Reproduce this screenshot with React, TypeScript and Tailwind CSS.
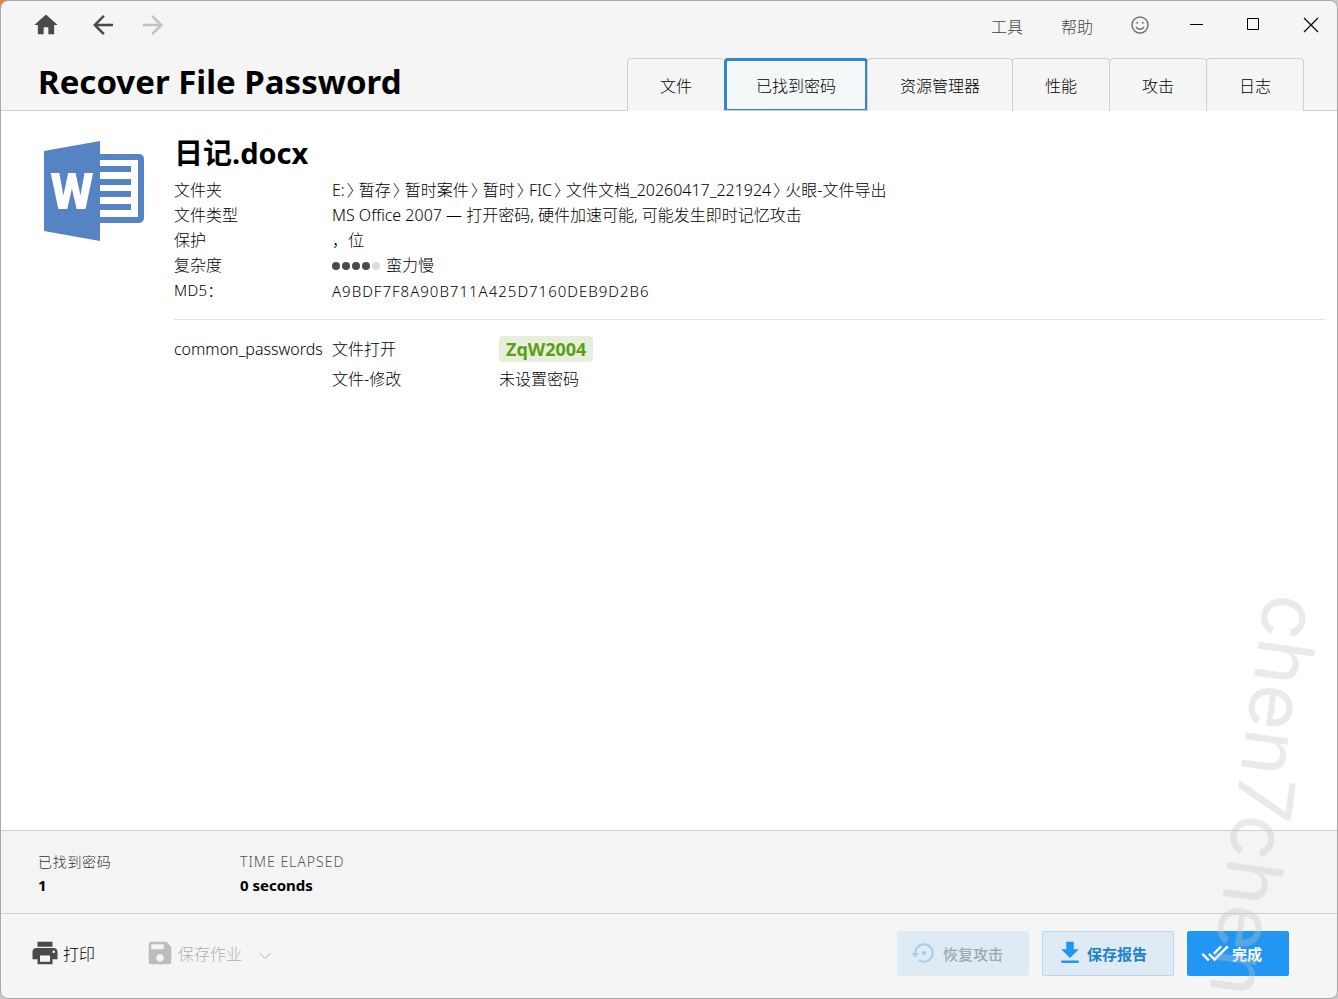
import React from "react";
import {
  MdArrowBack,
  MdArrowForward,
  MdDoneAll,
  MdFileDownload,
  MdHome,
  MdPrint,
  MdSave,
  MdSettingsBackupRestore,
} from "react-icons/md";

const tabs = ["文件", "已找到密码", "资源管理器", "性能", "攻击", "日志"];
const activeTab = "已找到密码";
const folders = ["E:", "暂存", "暂时案件", "暂时", "FIC", "文件文档_20260417_221924", "火眼-文件导出"];

function WordIcon() {
  return (
    <svg viewBox="0 0 100 100" className="size-[100px]" aria-label="Word" role="img">
      <rect x="40" y="13" width="60" height="69" rx="5" fill="#5583c4" />
      <rect x="54" y="19" width="40" height="57" fill="#fff" />
      <g fill="#5583c4">
        <rect x="54" y="25" width="33" height="6" />
        <rect x="54" y="38" width="33" height="6" />
        <rect x="54" y="50" width="33" height="6" />
        <rect x="54" y="63" width="33" height="6" />
      </g>
      <path d="M0 10 56 0v100L0 90z" fill="#5583c4" />
      <text
        x="28"
        y="68"
        textAnchor="middle"
        fontFamily="Roboto, sans-serif"
        fontWeight="900"
        fontSize="50"
        fill="#fff"
      >
        W
      </text>
    </svg>
  );
}

function SmileIcon() {
  return (
    <svg viewBox="0 0 18 18" className="size-[18px]" fill="none" stroke="currentColor" strokeWidth="1.5">
      <circle cx="9" cy="9" r="8" />
      <path d="M5 10.8a4.4 4.4 0 0 0 8 0" />
      <circle cx="6.2" cy="6.8" r="1" fill="currentColor" stroke="none" />
      <circle cx="11.8" cy="6.8" r="1" fill="currentColor" stroke="none" />
    </svg>
  );
}

function TitleBar() {
  return (
    <div className="flex h-12 items-center justify-between pr-[18px] pl-8">
      <nav className="flex items-center text-[#4a4a4a]">
        <button aria-label="Home" className="flex w-[26px] justify-center">
          <MdHome className="size-7 shrink-0" />
        </button>
        <button aria-label="Back" className="ml-[30px] flex w-7 justify-center">
          <MdArrowBack className="size-[30px] shrink-0" />
        </button>
        <button aria-label="Forward" disabled className="ml-[22px] flex w-7 justify-center text-[#c2c2c2]">
          <MdArrowForward className="size-[30px] shrink-0" />
        </button>
      </nav>
      <div className="flex items-center text-[#444]">
        <button className="mr-[38px] pt-[3px]">工具</button>
        <button className="mr-[38px] pt-[3px]">帮助</button>
        <button aria-label="Feedback" className="mr-10 text-[#757575]">
          <SmileIcon />
        </button>
        <div className="flex gap-[41px] text-black">
          <button aria-label="Minimize">
            <svg viewBox="0 0 16 16" className="size-4" stroke="currentColor">
              <path d="M1 7.5h13" />
            </svg>
          </button>
          <button aria-label="Maximize">
            <svg viewBox="0 0 16 16" className="size-4" fill="none" stroke="currentColor">
              <path d="M1.5 1.5h11v11h-11z" />
            </svg>
          </button>
          <button aria-label="Close">
            <svg viewBox="0 0 16 16" className="size-4" stroke="currentColor" strokeWidth="1.2">
              <path d="M1 1 15 15M15 1 1 15" />
            </svg>
          </button>
        </div>
      </div>
    </div>
  );
}

function Header() {
  return (
    <header className="border-b border-[#d0d0d0] bg-[#f5f5f5]">
      <TitleBar />
      <div className="flex items-end justify-between pt-[9px] pr-[34px] pl-[37px]">
        <h1 className="pb-1 text-[33px] leading-[48px] font-bold text-black">Recover File Password</h1>
        <div role="tablist" className="-mb-px flex h-[53px]">
          {tabs.map((tab) =>
            tab === activeTab ? (
              <button
                key={tab}
                role="tab"
                aria-selected="true"
                className="-mr-px flex h-[52px] items-center rounded-t border-3 border-b border-[#2f86c8] bg-[#f5f8f9] px-[29px] pt-px"
              >
                {tab}
              </button>
            ) : (
              <button
                key={tab}
                role="tab"
                aria-selected="false"
                className="-mr-px flex items-center rounded-t border border-b-0 border-[#d0d0d0] bg-[#f5f5f5] px-8 pt-px first:mr-0 first:border-r-0"
              >
                {tab}
              </button>
            ),
          )}
        </div>
      </div>
    </header>
  );
}

function FolderPath() {
  return (
    <span>
      {folders.map((folder, index) => (
        <span key={folder}>
          {index > 0 && <span className="mr-1 ml-[2px] [font-feature-settings:'halt']">〉</span>}
          {folder}
        </span>
      ))}
    </span>
  );
}

function Complexity() {
  return (
    <span className="flex items-center">
      <span className="mr-[6px] flex gap-[2px]" aria-label="4 / 5">
        <i className="size-2 rounded-full bg-[#4a4a4a]" />
        <i className="size-2 rounded-full bg-[#4a4a4a]" />
        <i className="size-2 rounded-full bg-[#4a4a4a]" />
        <i className="size-2 rounded-full bg-[#4a4a4a]" />
        <i className="size-2 rounded-full bg-[#dcdcdc]" />
      </span>
      蛮力慢
    </span>
  );
}

function FileDetails() {
  return (
    <main className="flex grow gap-[30px] bg-white pt-[30px] pr-3 pl-[43px]">
      <div className="shrink-0">
        <WordIcon />
      </div>
      <div className="grow">
        <h2 className="-mt-1 text-[29px] leading-8 font-bold text-black">日记.docx</h2>
        <dl className="mt-[9px] grid grid-cols-[158px_1fr] border-b border-[#e2e2e2] pb-[14px] leading-[25px]">
          <dt>文件夹</dt>
          <dd>
            <FolderPath />
          </dd>
          <dt>文件类型</dt>
          <dd>MS Office 2007 — 打开密码, 硬件加速可能, 可能发生即时记忆攻击</dd>
          <dt>保护</dt>
          <dd>，位</dd>
          <dt>复杂度</dt>
          <dd>
            <Complexity />
          </dd>
          <dt className="text-[15px] tracking-wide">MD5：</dt>
          <dd className="text-[15px] leading-[27px] tracking-[1px]">A9BDF7F8A90B711A425D7160DEB9D2B6</dd>
        </dl>
        <table className="mt-[14px] text-left leading-[30px]">
          <tbody>
            <tr>
              <th className="w-[158px] p-0 text-base font-light">common_passwords</th>
              <td className="w-[167px] p-0">文件打开</td>
              <td className="p-0">
                <span className="block h-[26px] w-fit rounded bg-[#e6efdc] px-[7px] text-lg leading-[26px] font-bold text-[#5b9f14]">
                  ZqW2004
                </span>
              </td>
            </tr>
            <tr>
              <td className="p-0" />
              <td className="p-0">文件-修改</td>
              <td className="p-0">未设置密码</td>
            </tr>
          </tbody>
        </table>
      </div>
    </main>
  );
}

function Stats() {
  return (
    <section className="grid grid-cols-[202px_1fr] border-t border-[#d0d0d0] bg-[#f4f4f4] pt-[19px] pb-[17px] pl-[37px]">
      <div>
        <p className="text-sm leading-6 tracking-wider text-[#333]">已找到密码</p>
        <p className="text-[15px] leading-[22px] font-bold text-black">1</p>
      </div>
      <div>
        <p className="text-sm leading-6 tracking-[1px] text-[#555]">TIME ELAPSED</p>
        <p className="text-[15px] leading-[22px] font-bold text-black">0 seconds</p>
      </div>
    </section>
  );
}

function Footer() {
  return (
    <footer className="flex h-[85px] items-center justify-between border-t border-[#d0d0d0] bg-[#f5f5f5] pr-12 pb-[6px] pl-[29px]">
      <div className="flex items-center">
        <button className="flex items-center gap-[3px] text-black">
          <MdPrint className="size-[30px] text-[#4a4a4a]" />
          <span className="pt-[2px]">打印</span>
        </button>
        <button disabled className="ml-[50px] flex items-center gap-[3px] text-[#b0b0b0]">
          <MdSave className="size-[30px] text-[#bdbdbd]" />
          <span className="pt-[2px]">保存作业</span>
          <svg viewBox="0 0 12 8" className="mt-[6px] ml-[14px] h-2 w-3" fill="none" stroke="currentColor">
            <path d="M.5 1 6 6.5 11.5 1" />
          </svg>
        </button>
      </div>
      <div className="flex gap-[13px] text-[15px] font-bold">
        <button
          disabled
          className="flex h-[45px] w-[132px] items-center gap-[6px] rounded-xs bg-[#deebf5] pl-[14px] font-medium text-[#9da9b2]"
        >
          <MdSettingsBackupRestore className="size-[26px] text-[#a6cff0]" />
          <span className="pt-[2px]">恢复攻击</span>
        </button>
        <button className="flex h-[45px] w-[132px] items-center gap-[2px] rounded-xs border border-[#b5d7f1] bg-[#deebf5] pl-3 text-[#1f82cf]">
          <MdFileDownload className="size-[30px] text-[#2196f3]" />
          <span className="pt-[2px]">保存报告</span>
        </button>
        <button className="flex h-[45px] w-[102px] items-center gap-[3px] rounded-xs bg-[#2196f3] pl-[14px] text-white">
          <MdDoneAll className="size-7" />
          <span className="pt-[2px]">完成</span>
        </button>
      </div>
    </footer>
  );
}

export default function App() {
  return (
    <div className="relative min-h-screen overflow-hidden bg-[#c9c9c9] font-['Noto_Sans','Noto_Sans_CJK_SC',sans-serif] font-light text-black">
      <div className="absolute top-0 left-0 size-2 bg-[#d98a4e]" />
      <div className="relative flex min-h-screen flex-col overflow-hidden rounded-lg border border-[#a8a8a8]">
        <Header />
        <FileDetails />
        <Stats />
        <Footer />
      </div>
      <div className="pointer-events-none absolute right-[6px] bottom-[398px] h-0 w-0">
        <span className="absolute top-0 left-0 block origin-top-left rotate-98 font-['Inter',sans-serif] text-[78px] leading-[78px] font-normal text-[#c4c4c4]/35">
          chen7chen
        </span>
      </div>
    </div>
  );
}
